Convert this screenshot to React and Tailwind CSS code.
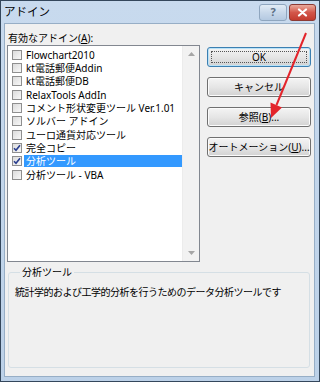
import React from 'react';

const items = [
  { label: 'Flowchart2010', checked: false },
  { label: 'kt電話郵便Addin', checked: false },
  { label: 'kt電話郵便DB', checked: false },
  { label: 'RelaxTools AddIn', checked: false },
  { label: 'コメント形状変更ツール Ver.1.01', checked: false },
  { label: 'ソルバー アドイン', checked: false },
  { label: 'ユーロ通貨対応ツール', checked: false },
  { label: '完全コピー', checked: true },
  { label: '分析ツール', checked: true, selected: true },
  { label: '分析ツール - VBA', checked: false },
];

function CheckBox({ checked }) {
  return (
    <span className="w-[10px] h-[10px] shrink-0 border border-[#8f8f8f] bg-gradient-to-br from-[#dcdcdc] to-[#f8f8f8] flex items-center justify-center">
      {checked && (
        <svg width="8" height="8" viewBox="0 0 8 8">
          <path d="M1 4.2 L3 6.3 L7 1.2" fill="none" stroke="#2a3f8f" strokeWidth="1.6" />
        </svg>
      )}
    </span>
  );
}

function Button({ children, isDefault }) {
  return (
    <button
      className={
        'relative w-[104px] h-[20px] rounded-[3px] border text-[10px] text-black bg-gradient-to-b from-[#f4f4f4] via-[#e6e6e6] to-[#d2d2d2] ' +
        (isDefault ? 'border-[#3c7fb1] shadow-[inset_0_0_0_1px_#b8e2f8]' : 'border-[#707070] shadow-[inset_0_0_0_1px_#fbfbfb]')
      }
    >
      {isDefault && <span className="absolute inset-[3px] border border-dotted border-[#555]" />}
      {children}
    </button>
  );
}

export default function App() {
  return (
    <div
      className="relative w-[320px] h-[382px] flex flex-col border border-[#34475c] bg-gradient-to-b from-[#c8daee] to-[#bcd1e8] overflow-hidden"
      style={{ fontFamily: '"Noto Sans", "Noto Sans CJK JP", sans-serif' }}
    >
      {/* title bar */}
      <div className="h-[22px] flex items-center pl-[3px] pr-[3px]">
        <span className="text-[11.5px] text-black">アドイン</span>
        <div className="ml-auto flex items-start gap-[2px] pt-[1px]">
          <div className="w-[28px] h-[17px] rounded-[3px] border border-[#8fa6bf] bg-gradient-to-b from-[#e2ecf6] via-[#c8d8ea] to-[#b4c9e1] flex items-center justify-center text-[11px] font-bold text-[#5c6f85]">
            ?
          </div>
          <div className="w-[27px] h-[17px] rounded-[3px] border border-[#8c3a34] bg-gradient-to-b from-[#e9a99c] via-[#d3564a] to-[#c33b2e] flex items-center justify-center">
            <svg width="11" height="9" viewBox="0 0 11 9">
              <path d="M2 1.5 L9 7.5 M9 1.5 L2 7.5" stroke="#ffffff" strokeWidth="2.2" strokeLinecap="round" />
            </svg>
          </div>
        </div>
      </div>

      {/* client area */}
      <div className="flex-1 ml-[3px] mr-[4px] mb-[4px] bg-[#f0f0f0] border border-[#97aec6] px-[2px] pt-[7px] text-[10px] text-black">
        <div className="flex gap-[7px]">
          <div className="w-[193px]">
            <div className="h-[14px] leading-[14px] pl-[1px]">
              有効なアドイン(<span className="underline">A</span>):
            </div>
            <div className="h-[217px] border border-[#828790] bg-white flex">
              <div className="flex-1 pt-[2px]">
                {items.map((it) => (
                  <div key={it.label} className="h-[13.33px] flex items-center pl-[4px]">
                    <CheckBox checked={it.checked} />
                    <span
                      className={
                        'ml-[2px] pl-[2px] flex-1 h-[12px] leading-[12px] whitespace-nowrap ' +
                        (it.selected ? 'bg-[#3399ff] text-white' : '')
                      }
                    >
                      {it.label}
                    </span>
                  </div>
                ))}
              </div>
              <div className="w-[17px] bg-[#f2f2f2] border-l border-[#ececec] flex flex-col items-center justify-between py-[6px]">
                <svg width="7" height="4" viewBox="0 0 7 4">
                  <path d="M0 4 L3.5 0 L7 4 Z" fill="#a6a6a6" />
                </svg>
                <svg width="7" height="4" viewBox="0 0 7 4">
                  <path d="M0 0 L3.5 4 L7 0 Z" fill="#a6a6a6" />
                </svg>
              </div>
            </div>
          </div>
          <div className="flex flex-col gap-[10px] pt-[16px]">
            <Button isDefault>OK</Button>
            <Button>キャンセル</Button>
            <Button>
              参照(<span className="underline">B</span>)...
            </Button>
            <Button>
              オートメーション(<span className="underline">U</span>)...
            </Button>
          </div>
        </div>

        <fieldset className="mt-[4px] ml-[1px] w-[302px] h-[102px] border border-[#d5dfe5] rounded-[3px] pl-[6px] pt-[8px]">
          <legend className="ml-[5px] px-[2px] leading-[12px]">分析ツール</legend>
          <div className="leading-[12px] tracking-[-0.5px]">統計学的および工学的分析を行うためのデータ分析ツールです</div>
        </fieldset>
      </div>

      {/* red arrow annotation */}
      <svg className="absolute left-0 top-0 pointer-events-none" width="320" height="382">
        <line x1="305" y1="32" x2="275.5" y2="104" stroke="#e3242b" strokeWidth="2" />
        <polygon points="270,117 281,106.5 269.5,101.5" fill="#e3242b" />
      </svg>
    </div>
  );
}
